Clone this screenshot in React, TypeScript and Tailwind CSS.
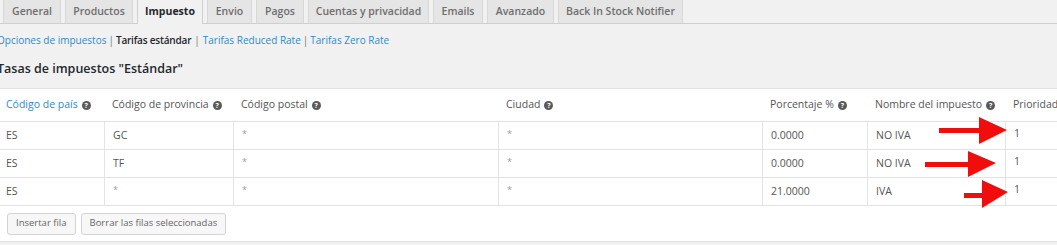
import React from "react";

const tabs = [
  { label: "General", w: "w-[58px]" },
  { label: "Productos", w: "w-[68px]" },
  { label: "Impuesto", w: "w-[66px]", active: true },
  { label: "Envio", w: "w-[45px]" },
  { label: "Pagos", w: "w-[48px]" },
  { label: "Cuentas y privacidad", w: "w-[121px]" },
  { label: "Emails", w: "w-[50px]" },
  { label: "Avanzado", w: "w-[67px]" },
  { label: "Back In Stock Notifier", w: "w-[125px]" },
];

const headers = [
  { label: "Código de país", link: true },
  { label: "Código de provincia" },
  { label: "Código postal" },
  { label: "Ciudad" },
  { label: "Porcentaje %" },
  { label: "Nombre del impuesto" },
  { label: "Prioridad", noHelp: true },
];

const rows = [
  ["ES", "GC", "*", "*", "0.0000", "NO IVA", "1"],
  ["ES", "TF", "*", "*", "0.0000", "NO IVA", "1"],
  ["ES", "*", "*", "*", "21.0000", "IVA", "1"],
];

const grid = "grid grid-cols-[106px_129px_265px_264px_105px_138px_120px]";

const HelpTip = () => (
  <span className="ml-[4px] inline-flex h-[9px] w-[9px] items-center justify-center rounded-full bg-[#5a5a5a] text-[7px] font-bold leading-none text-white">
    ?
  </span>
);

const Arrows = () => (
  <svg
    className="pointer-events-none absolute left-0 top-0"
    width={1057}
    height={245}
    viewBox="0 0 1057 245"
  >
    <g fill="#f20d0d">
      <rect x={939} y={128} width={42} height={5} />
      <polygon points="979,117 1007,130 979,144" />
      <rect x={925} y={162} width={45} height={5} />
      <polygon points="968,151 996,163 968,177" />
      <rect x={964} y={193} width={21} height={5} />
      <polygon points="982,180 1008,192 982,208" />
    </g>
  </svg>
);

const App = () => {
  return (
    <div className="relative h-[245px] w-full overflow-hidden bg-[#f1f1f1] font-['Open_Sans','Noto_Sans',sans-serif] text-[#555]">
      <div className="-ml-[3px] w-[1130px]">
        {/* tabs */}
        <div className="flex h-[24px] items-end gap-[4px] border-b border-[#cfcfcf] pl-[6px]">
          {tabs.map((t) =>
            t.active ? (
              <div
                key={t.label}
                className={`${t.w} -mb-px flex h-[25px] items-center justify-center border border-b-0 border-[#cfcfcf] bg-[#f1f1f1] text-[10.5px] font-bold text-[#23282d]`}
              >
                {t.label}
              </div>
            ) : (
              <div
                key={t.label}
                className={`${t.w} flex h-[24px] items-center justify-center border border-b-0 border-[#d8d8d8] bg-[#e5e5e5] text-[10.5px] font-semibold text-[#6e6e6e]`}
              >
                {t.label}
              </div>
            )
          )}
        </div>

        {/* sub nav */}
        <div className="mt-[9px] flex items-center text-[10px] leading-[14px]">
          <a className="text-[#2f8bc4]">Opciones de impuestos</a>
          <span className="mx-[2px] text-[#777]">|</span>
          <span className="font-semibold tracking-[-0.2px] text-[#23282d]">Tarifas estándar</span>
          <span className="mx-[3px] text-[#777]">|</span>
          <a className="text-[#2f8bc4]">Tarifas Reduced Rate</a>
          <span className="mx-[2px] text-[#777]">|</span>
          <a className="text-[#2f8bc4]">Tarifas Zero Rate</a>
        </div>

        <h2 className="mt-[13px] text-[12.5px] font-semibold leading-[18px] text-[#23282d]">
          Tasas de impuestos "Estándar"
        </h2>

        {/* table */}
        <div className="mt-[10px] border border-[#e2e2e2] bg-white text-[10.5px]">
          <div className={`${grid} h-[32px] items-center`}>
            {headers.map((h) => (
              <div
                key={h.label}
                className={`flex items-center pl-[8px] ${h.link ? "text-[#2f8bc4]" : "text-[#555]"}`}
              >
                <span className="whitespace-nowrap">{h.label}</span>
                {!h.noHelp && <HelpTip />}
              </div>
            ))}
          </div>
          {rows.map((r, i) => (
            <div key={i} className={`${grid} h-[28px] border-t border-[#e2e2e2]`}>
              {r.map((c, j) => (
                <div
                  key={j}
                  className={`flex items-center pl-[8px] ${j > 0 ? "border-l border-[#e4e4e4]" : ""} ${j === 6 ? "pb-[4px]" : ""} ${c === "*" ? "pb-[3px] text-[9px] text-[#9a9a9a]" : ""}`}
                >
                  {c}
                </div>
              ))}
            </div>
          ))}
          <div className="flex h-[36px] items-center gap-[5px] border-t border-[#e2e2e2] pl-[9px]">
            <button className="h-[22px] rounded-[3px] border border-[#d4d4d4] bg-[#f7f7f7] px-[8px] text-[9.5px] text-[#666]">
              Insertar fila
            </button>
            <button className="h-[22px] rounded-[3px] border border-[#d4d4d4] bg-[#f7f7f7] px-[8px] text-[9.5px] text-[#666]">
              Borrar las filas seleccionadas
            </button>
          </div>
        </div>
      </div>
      <Arrows />
    </div>
  );
};

export default App;
